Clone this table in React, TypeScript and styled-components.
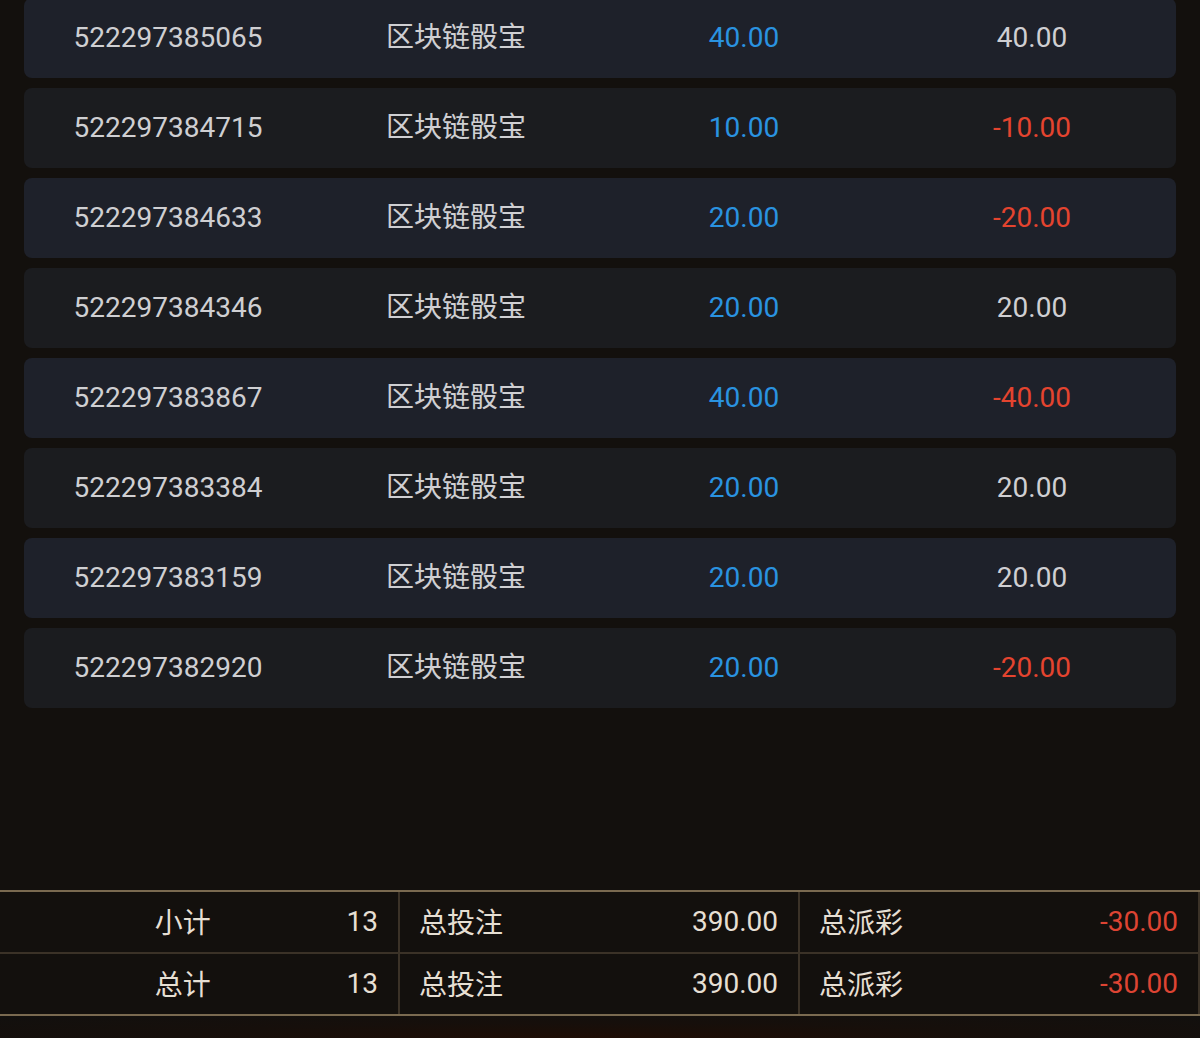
import React from 'react';
import styled, { createGlobalStyle } from 'styled-components';

interface BetRecord {
  id: string;
  game: string;
  bet: string;
  payout: string;
}

const records: BetRecord[] = [
  { id: '522297385065', game: '区块链骰宝', bet: '40.00', payout: '40.00' },
  { id: '522297384715', game: '区块链骰宝', bet: '10.00', payout: '-10.00' },
  { id: '522297384633', game: '区块链骰宝', bet: '20.00', payout: '-20.00' },
  { id: '522297384346', game: '区块链骰宝', bet: '20.00', payout: '20.00' },
  { id: '522297383867', game: '区块链骰宝', bet: '40.00', payout: '-40.00' },
  { id: '522297383384', game: '区块链骰宝', bet: '20.00', payout: '20.00' },
  { id: '522297383159', game: '区块链骰宝', bet: '20.00', payout: '20.00' },
  { id: '522297382920', game: '区块链骰宝', bet: '20.00', payout: '-20.00' },
];

const totals = [
  { label: '小计', count: '13', bet: '390.00', payout: '-30.00' },
  { label: '总计', count: '13', bet: '390.00', payout: '-30.00' },
];

const GlobalStyle = createGlobalStyle`
  html, body {
    margin: 0;
    padding: 0;
    background: #13100d;
  }
  body {
    font-family: Roboto, "Noto Sans CJK SC", sans-serif;
    overflow: hidden;
  }
`;

const Page = styled.div`
  height: 1038px;
  display: flex;
  flex-direction: column;
  background: #13100d;
`;

const List = styled.div`
  display: flex;
  flex-direction: column;
  gap: 10px;
  padding: 0 24px;
  margin-top: -2px;
`;

const Row = styled.div<{ $alt: boolean }>`
  height: 80px;
  display: grid;
  grid-template-columns: repeat(4, 1fr);
  align-items: center;
  border-radius: 8px;
  background: ${p => (p.$alt ? '#1e212a' : '#1b1c1f')};
`;

const Cell = styled.div<{ $tone?: 'blue' | 'red' | 'plain' }>`
  text-align: center;
  font-size: 28px;
  line-height: 32px;
  color: ${p => (p.$tone === 'blue' ? '#2a93e0' : p.$tone === 'red' ? '#e4442f' : '#cfcfd2')};
`;

const Spacer = styled.div`
  flex: 1;
`;

const Footer = styled.div`
  border-top: 2px solid #7a6a50;
  border-bottom: 2px solid #7a6a50;
`;

const FooterRow = styled.div`
  display: grid;
  grid-template-columns: repeat(3, 1fr);
  height: 60px;
  & + & {
    border-top: 2px solid #3b3227;
  }
`;

const FooterCell = styled.div`
  display: flex;
  align-items: center;
  border-right: 2px solid #3b3227;
  padding: 0 20px 2px 19px;
  font-size: 28px;
  color: #e6dfd3;
`;

const CenteredLabel = styled.span`
  flex: 1;
  text-align: center;
`;

const Label = styled.span`
  flex: 1;
`;

const Value = styled.span<{ $negative?: boolean }>`
  color: ${p => (p.$negative ? '#dd4433' : '#e6dfd3')};
`;

const BottomGlow = styled.div`
  height: 22px;
  background: radial-gradient(ellipse at 50% 100%, #1e0d05 0%, #160f0b 50%, #12100e 100%);
`;

const toneOf = (v: string) => (v.startsWith('-') ? 'red' : 'plain');

const App: React.FC = () => (
  <>
    <GlobalStyle />
    <Page>
      <List>
        {records.map((r, i) => (
          <Row key={r.id} $alt={i % 2 === 0}>
            <Cell>{r.id}</Cell>
            <Cell>{r.game}</Cell>
            <Cell $tone="blue">{r.bet}</Cell>
            <Cell $tone={toneOf(r.payout)}>{r.payout}</Cell>
          </Row>
        ))}
      </List>
      <Spacer />
      <Footer>
        {totals.map(t => (
          <FooterRow key={t.label}>
            <FooterCell>
              <CenteredLabel>{t.label}</CenteredLabel>
              <Value>{t.count}</Value>
            </FooterCell>
            <FooterCell>
              <Label>总投注</Label>
              <Value>{t.bet}</Value>
            </FooterCell>
            <FooterCell>
              <Label>总派彩</Label>
              <Value $negative={t.payout.startsWith('-')}>{t.payout}</Value>
            </FooterCell>
          </FooterRow>
        ))}
      </Footer>
      <BottomGlow />
    </Page>
  </>
);

export default App;
